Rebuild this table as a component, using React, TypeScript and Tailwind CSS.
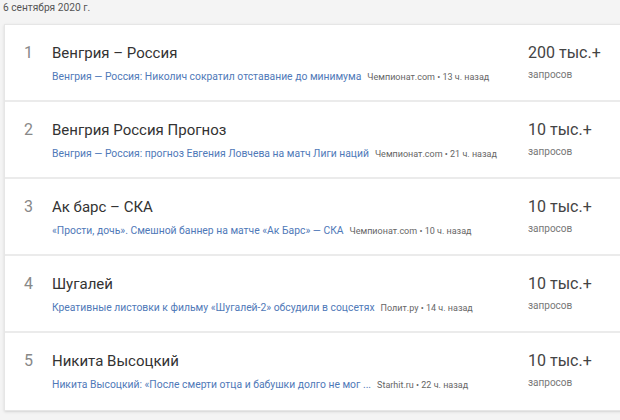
import React from "react";

const rows = [
  {
    n: 1,
    title: "Венгрия – Россия",
    news: "Венгрия — Россия: Николич сократил отставание до минимума",
    src: "Чемпионат.com • 13 ч. назад",
    value: "200 тыс.+",
  },
  {
    n: 2,
    title: "Венгрия Россия Прогноз",
    news: "Венгрия — Россия: прогноз Евгения Ловчева на матч Лиги наций",
    src: "Чемпионат.com • 21 ч. назад",
    value: "10 тыс.+",
  },
  {
    n: 3,
    title: "Ак барс – СКА",
    news: "«Прости, дочь». Смешной баннер на матче «Ак Барс» — СКА",
    src: "Чемпионат.com • 10 ч. назад",
    value: "10 тыс.+",
  },
  {
    n: 4,
    title: "Шугалей",
    news: "Креативные листовки к фильму «Шугалей-2» обсудили в соцсетях",
    src: "Полит.ру • 14 ч. назад",
    value: "10 тыс.+",
  },
  {
    n: 5,
    title: "Никита Высоцкий",
    news: "Никита Высоцкий: «После смерти отца и бабушки долго не мог ...",
    src: "Starhit.ru • 22 ч. назад",
    value: "10 тыс.+",
  },
];

export default function App() {
  return (
    <div
      className="w-[620px] h-[420px] overflow-hidden bg-[#f4f4f4]"
      style={{ fontFamily: "Roboto, 'Noto Sans', sans-serif" }}
    >
      <div className="pl-[3px] pt-[1px] h-[24px] text-[10.2px] leading-[14px] text-[#555]">
        6 сентября 2020 г.
      </div>
      <div className="ml-1 w-[640px] bg-white border border-[#e6e6e6] shadow-sm">
        {rows.map((r, i) => (
          <div
            key={r.n}
            className={`flex h-[77px] pt-[18px] ${i < rows.length - 1 ? "border-b-2 border-[#ebebeb]" : ""}`}
          >
            <div className="w-[47px] pl-[19px] text-[16px] leading-5 text-[#888]">{r.n}</div>
            <div className="w-[476px]">
              <div className="text-[15px] leading-5 text-[#333]">{r.title}</div>
              <div className="mt-[5px] leading-[14px] whitespace-nowrap">
                <span className="text-[10.35px] text-[#4f79b8]">{r.news}</span>
                <span className="ml-[6px] text-[9px] text-[#666]">{r.src}</span>
              </div>
            </div>
            <div>
              <div className="text-[16px] leading-5 text-[#444]">{r.value}</div>
              <div className="mt-[5px] text-[10px] leading-[14px] text-[#777]">запросов</div>
            </div>
          </div>
        ))}
      </div>
    </div>
  );
}
